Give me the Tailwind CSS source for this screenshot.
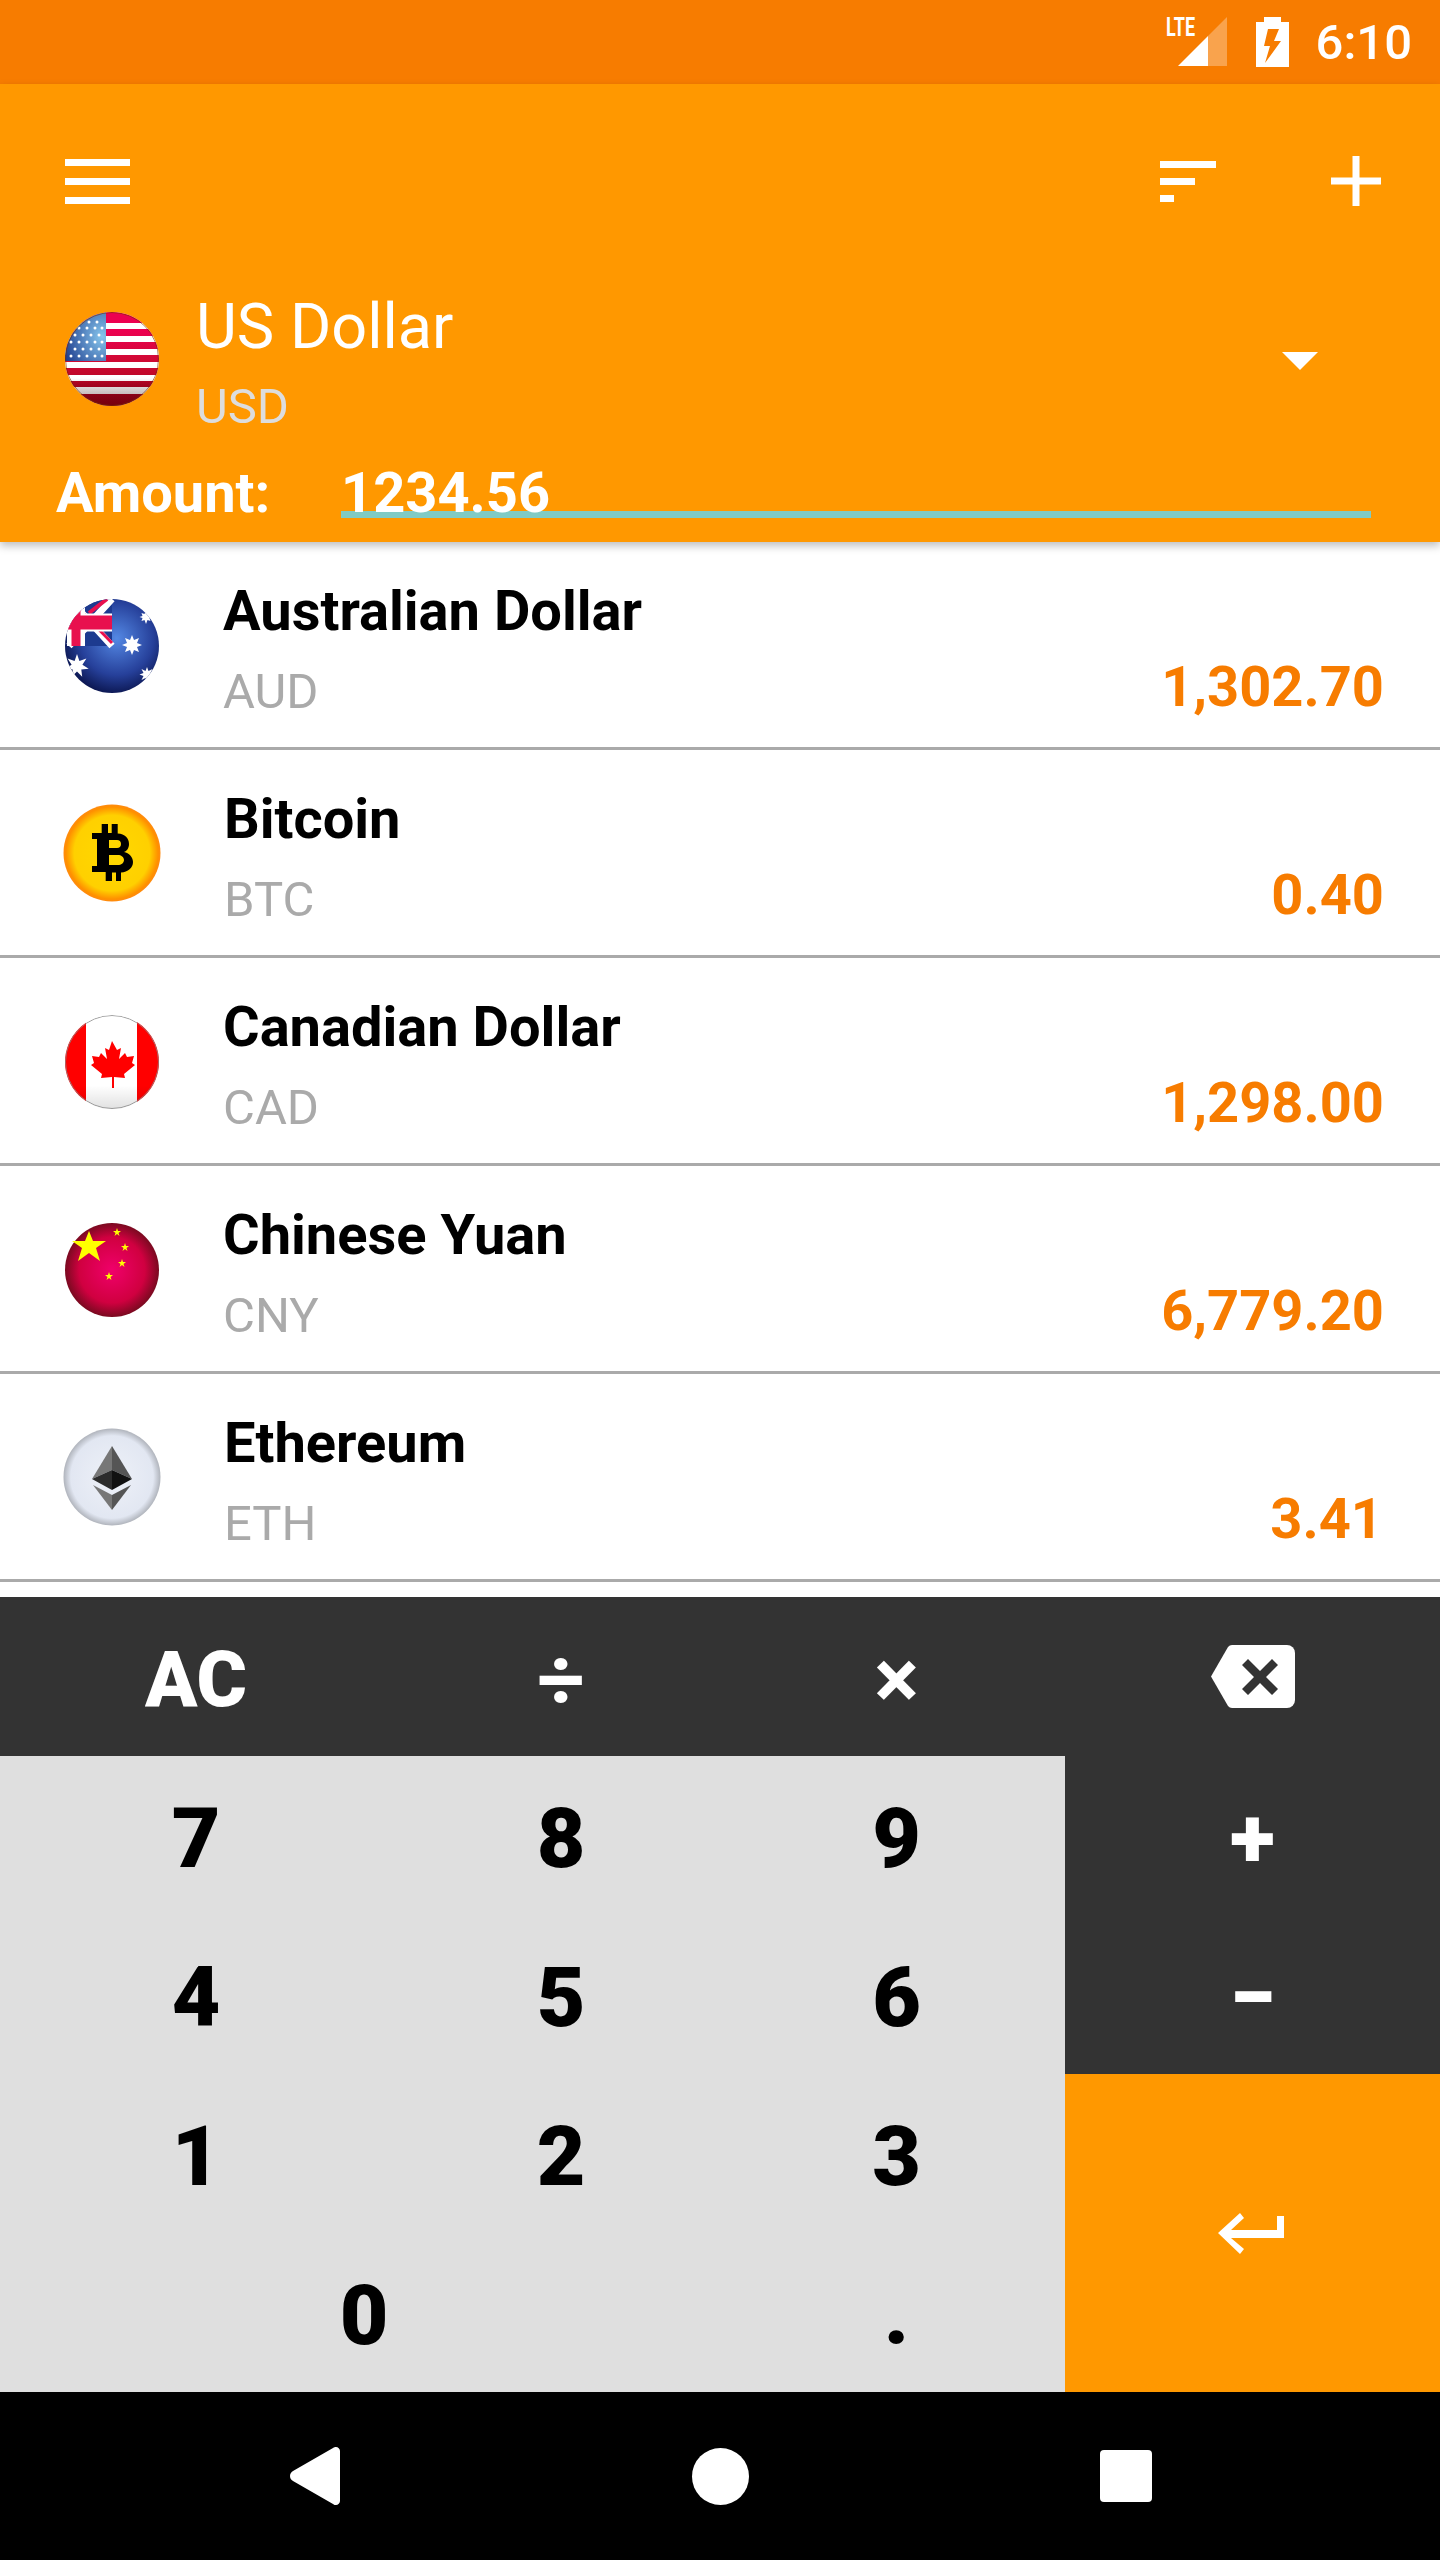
<!DOCTYPE html>
<html lang="en">
<head>
  <meta charset="UTF-8">
  <title>Currency Converter</title>
  <script src="https://cdn.jsdelivr.net/npm/@tailwindcss/browser@4"></script>
</head>
<body class="bg-white font-['Roboto',sans-serif] text-black">
<div class="w-[1440px] h-[2560px] flex flex-col overflow-hidden relative">

  <!-- Status bar -->
  <div class="h-[84px] bg-[#f77c00] flex items-center justify-end pr-[28px] shrink-0">
    <div class="relative w-[64px] h-[84px] mr-[26px]">
      <span class="absolute left-0 top-[13px] text-[25px] leading-[30px] font-bold text-white origin-left scale-x-[0.72]">LTE</span>
      <svg class="absolute left-0 top-0" width="64" height="84" viewBox="0 0 64 84">
        <path d="M12 66L42 36V66Z" fill="#fff"/>
        <path d="M42 36L61 17V66H42Z" fill="#fff" opacity=".3"/>
      </svg>
    </div>
    <svg class="mr-[27px]" width="33" height="50" viewBox="0 0 33 50">
      <path d="M8 0H25V5H33V50H0V5H8Z" fill="#fff"/>
      <path d="M12 12H23L18 24H25L9 46L14 29H8Z" fill="#f77c00"/>
    </svg>
    <span class="text-[49px] leading-none font-medium text-white">6:10</span>
  </div>

  <!-- App bar -->
  <div class="h-[458px] bg-[#ff9800] shrink-0 relative z-10 shadow-[0_4px_8px_rgba(0,0,0,0.25)]">
    <div class="h-[194px] flex items-center pl-[65px] pr-[59px]">
      <div class="flex flex-col gap-[12px] w-[65px]">
        <div class="h-[7px] bg-white"></div>
        <div class="h-[7px] bg-white"></div>
        <div class="h-[7px] bg-white"></div>
      </div>
      <div class="ml-auto flex flex-col gap-[10px] w-[56px]">
        <div class="h-[7px] w-[56px] bg-white"></div>
        <div class="h-[7px] w-[35px] bg-white"></div>
        <div class="h-[7px] w-[14px] bg-white"></div>
      </div>
      <svg class="ml-[115px]" width="50" height="50" viewBox="0 0 50 50"><path d="M21.5 0h7v21.5H50v7H28.5V50h-7V28.500H0v-7h21.5z" fill="#fff"/></svg>
    </div>

    <div class="h-[162px] flex items-center pl-[65px] pr-[122px]">
      <svg width="94" height="94" viewBox="0 0 94 94" class="shrink-0">
        <defs>
          <clipPath id="usClip"><circle cx="47" cy="47" r="47"/></clipPath>
          <radialGradient id="usCanton" cx="0.9" cy="0.5" r="1"><stop offset="0" stop-color="#86c5ec"/><stop offset="1" stop-color="#1c3a8c"/></radialGradient>
          <linearGradient id="usRed" x1="0" y1="0" x2="0" y2="1"><stop offset="0.2" stop-color="#ec0050"/><stop offset="0.55" stop-color="#cc0a30"/><stop offset="1" stop-color="#a00018"/></linearGradient>
          <linearGradient id="usShade" x1="0" y1="0" x2="0" y2="1"><stop offset="0.7" stop-color="#000" stop-opacity="0"/><stop offset="1" stop-color="#400" stop-opacity=".45"/></linearGradient>
        </defs>
        <g clip-path="url(#usClip)">
          <rect width="94" height="94" fill="#fff"/>
          <path d="M0 0h94v11H0zM0 17h94v7H0zM0 30h94v7H0zM0 43h94v7H0zM0 56h94v7H0zM0 69h94v6H0zM0 82h94v12H0z" fill="url(#usRed)"/>
          <rect width="41" height="49" fill="url(#usCanton)"/>
          <g fill="#fff">
            <circle cx="24" cy="10" r="1.500"/><circle cx="32" cy="10" r="1.500"/>
            <circle cx="14" cy="16" r="1.500"/><circle cx="22" cy="16" r="1.500"/><circle cx="30" cy="16" r="1.500"/><circle cx="37" cy="16" r="1.500"/>
            <circle cx="10" cy="23" r="1.500"/><circle cx="18" cy="23" r="1.500"/><circle cx="26" cy="23" r="1.500"/><circle cx="34" cy="23" r="1.500"/>
            <circle cx="6" cy="30" r="1.500"/><circle cx="14" cy="30" r="1.500"/><circle cx="22" cy="30" r="1.500"/><circle cx="30" cy="30" r="1.500"/><circle cx="37" cy="30" r="1.500"/>
            <circle cx="10" cy="37" r="1.500"/><circle cx="18" cy="37" r="1.500"/><circle cx="26" cy="37" r="1.500"/><circle cx="34" cy="37" r="1.500"/>
            <circle cx="6" cy="44" r="1.500"/><circle cx="14" cy="44" r="1.500"/><circle cx="22" cy="44" r="1.500"/><circle cx="30" cy="44" r="1.500"/><circle cx="37" cy="44" r="1.500"/>
          </g>
          <rect width="94" height="94" fill="url(#usShade)"/>
          <circle cx="47" cy="47" r="46.500" fill="none" stroke="#7a3000" stroke-opacity=".6"/>
        </g>
      </svg>
      <div class="ml-[37px] mt-[8px] flex flex-col">
        <span class="text-[63px] leading-[74px] text-white">US Dollar</span>
        <span class="text-[49px] leading-[58px] mt-[14px] text-[#ddd]">USD</span>
      </div>
      <div class="ml-auto mt-[4px] w-0 h-0 border-l-[18px] border-r-[18px] border-t-[18px] border-l-transparent border-r-transparent border-t-white"></div>
    </div>

    <div class="flex items-start pl-[56px] mt-[20px]">
      <span class="w-[285px] text-[56px] leading-[66px] font-bold text-white">Amount:</span>
      <div class="w-[1030px] h-[58px] border-b-[7px] border-[#80cbc4] text-[56px] leading-[66px] font-bold text-white">1234.56</div>
    </div>
  </div>

  <!-- Currency list -->
  <div class="flex-1 bg-white overflow-hidden">

    <div class="h-[208px] border-b-[3px] border-[#aaa] flex items-center pl-[65px] pr-[56px]">
      <svg width="94" height="94" viewBox="0 0 94 94" class="shrink-0 mt-[3px]">
        <defs>
          <clipPath id="auClip"><circle cx="47" cy="47" r="47"/></clipPath>
          <radialGradient id="auBlue" cx="0.55" cy="0.42" r="0.6"><stop offset="0" stop-color="#5488e4"/><stop offset="0.65" stop-color="#26409a"/><stop offset="1" stop-color="#0b1650"/></radialGradient>
        </defs>
        <g clip-path="url(#auClip)">
          <rect width="94" height="94" fill="url(#auBlue)"/>
          <path d="M4 0H47V47H4Z" fill="#1d3a8f"/>
          <path d="M4 0L47 47M47 0L4 47" stroke="#fff" stroke-width="7"/>
          <path d="M14 10L47 44" stroke="#e8104e" stroke-width="3"/>
          <path d="M42 0L24 14" stroke="#e8104e" stroke-width="4"/>
          <path d="M11 0V47M0 23.500H47" stroke="#fff" stroke-width="18"/>
          <path d="M11 0V47" stroke="#e8104e" stroke-width="9"/>
          <path d="M0 23.500H47" stroke="#e8104e" stroke-width="14"/>
          <path d="M67 36l2 5 5-2-2 5 5 2-5 2 2 5-5-2-2 5-2-5-5 2 2-5-5-2 5-2-2-5 5 2z" fill="#fff"/>
          <polygon points="12,55 14.400,62 21.400,59.500 17.400,65.800 23.700,69.700 16.300,70.400 17.200,77.800 12,72.500 6.800,77.800 7.700,70.400 0.300,69.700 6.600,65.800 2.600,59.500 9.600,62" fill="#fff"/>
          <path d="M82 68l1.500 4 4-2-2 4 4 1.500-4 1.500 2 4-4-2-1.500 4-1.500-4-4 2 2-4-4-1.500 4-1.500-2-4 4 2z" fill="#fff"/>
          <path d="M81 11l1.500 4 3-1-1 3 3 1-3 1 1 3-3-1-1.500 4-1.500-4-3 1 1-3-3-1 3-1-1-3 3 1z" fill="#fff"/>
        </g>
      </svg>
      <div class="ml-[64px] flex flex-col self-start pt-[36px]">
        <span class="text-[56px] leading-[66px] font-bold">Australian Dollar</span>
        <span class="text-[49px] leading-[58px] mt-[19px] text-[#aaa]">AUD</span>
      </div>
      <span class="ml-auto self-end pb-[27px] text-[56px] leading-[66px] font-bold text-[#f77c00]">1,302.70</span>
    </div>

    <div class="h-[208px] border-b-[3px] border-[#aaa] flex items-center pl-[63px] pr-[56px]">
      <svg width="98" height="98" viewBox="0 0 98 98" class="shrink-0">
        <defs><radialGradient id="btcBg" cx="0.5" cy="0.5" r="0.5"><stop offset="0" stop-color="#ffd900"/><stop offset="0.78" stop-color="#ffd000"/><stop offset="0.95" stop-color="#ff9000"/><stop offset="1" stop-color="#ff8a10"/></radialGradient></defs>
        <circle cx="49" cy="49" r="48.500" fill="url(#btcBg)"/>
        <path d="M38.700 20h6.300v9h3.700v-9h6v9.500C62 30 66 34 66 40c0 4-2 7-5 8 5 1 9 5 9 10 0 6-5 10-12 10.500V77h-5v-8.500h-4V77h-6.300v-9H29v-6h5V35h-5v-6h9.700zM46 36v8h8c2.500 0 4-1.500 4-4s-1.500-4-4-4zM46 51v10h9c3 0 6-2 6-5s-3-5-6-5z" fill="#000" fill-rule="evenodd"/>
      </svg>
      <div class="ml-[63px] flex flex-col self-start pt-[36px]">
        <span class="text-[56px] leading-[66px] font-bold">Bitcoin</span>
        <span class="text-[49px] leading-[58px] mt-[19px] text-[#aaa]">BTC</span>
      </div>
      <span class="ml-auto self-end pb-[27px] text-[56px] leading-[66px] font-bold text-[#f77c00]">0.40</span>
    </div>

    <div class="h-[208px] border-b-[3px] border-[#aaa] flex items-center pl-[65px] pr-[56px]">
      <svg width="94" height="94" viewBox="0 0 94 94" class="shrink-0 mt-[3px]">
        <defs>
          <clipPath id="caClip"><circle cx="47" cy="47" r="47"/></clipPath>
          <linearGradient id="caShade" x1="0" y1="0" x2="0" y2="1"><stop offset="0.75" stop-color="#000" stop-opacity="0"/><stop offset="1" stop-color="#000" stop-opacity=".12"/></linearGradient>
        </defs>
        <g clip-path="url(#caClip)">
          <rect width="94" height="94" fill="#fff"/>
          <rect width="21" height="94" fill="#f00"/>
          <rect x="72" width="22" height="94" fill="#f00"/>
          <path d="M47 26l5 9 4-2-2 11 6-6 2 4 7-1-2 7 3 2-11 9 1 4-11-1v11h-2V62l-11 1 1-4-11-9 3-2-2-7 7 1 2-4 6 6-2-11 4 2z" fill="#f00"/>
          <rect width="94" height="94" fill="url(#caShade)"/>
          <circle cx="47" cy="47" r="46.500" fill="none" stroke="#888" stroke-opacity=".8"/>
        </g>
      </svg>
      <div class="ml-[64px] flex flex-col self-start pt-[36px]">
        <span class="text-[56px] leading-[66px] font-bold">Canadian Dollar</span>
        <span class="text-[49px] leading-[58px] mt-[19px] text-[#aaa]">CAD</span>
      </div>
      <span class="ml-auto self-end pb-[27px] text-[56px] leading-[66px] font-bold text-[#f77c00]">1,298.00</span>
    </div>

    <div class="h-[208px] border-b-[3px] border-[#aaa] flex items-center pl-[65px] pr-[56px]">
      <svg width="94" height="94" viewBox="0 0 94 94" class="shrink-0 mt-[3px]">
        <defs><radialGradient id="cnRed" cx="0.5" cy="0.5" r="0.5"><stop offset="0" stop-color="#f0006a"/><stop offset="0.7" stop-color="#d00040"/><stop offset="1" stop-color="#7a0a20"/></radialGradient></defs>
        <circle cx="47" cy="47" r="47" fill="url(#cnRed)"/>
        <path d="M24 8l4 10h13l-10 7 4 13-11-8-11 8 4-13L7 18h13z" fill="#ff0"/>
        <path d="M52 5l1 3h3l-2.500 2 1 3-2.500-2-2.500 2 1-3L48 8h3z" fill="#ff0"/>
        <path d="M60 20l1 3h3l-2.500 2 1 3-2.500-2-2.500 2 1-3L56 23h3z" fill="#ff0"/>
        <path d="M57 36l1 3h3l-2.500 2 1 3-2.500-2-2.500 2 1-3L53 39h3z" fill="#ff0"/>
        <path d="M44 49l1 3h3l-2.500 2 1 3-2.500-2-2.500 2 1-3L40 52h3z" fill="#ff0"/>
      </svg>
      <div class="ml-[64px] flex flex-col self-start pt-[36px]">
        <span class="text-[56px] leading-[66px] font-bold">Chinese Yuan</span>
        <span class="text-[49px] leading-[58px] mt-[19px] text-[#aaa]">CNY</span>
      </div>
      <span class="ml-auto self-end pb-[27px] text-[56px] leading-[66px] font-bold text-[#f77c00]">6,779.20</span>
    </div>

    <div class="h-[208px] border-b-[3px] border-[#aaa] flex items-center pl-[63px] pr-[57px]">
      <svg width="98" height="98" viewBox="0 0 98 98" class="shrink-0">
        <defs><radialGradient id="ethBg" cx="0.5" cy="0.5" r="0.5"><stop offset="0" stop-color="#eef1f8"/><stop offset="0.85" stop-color="#e2e7f2"/><stop offset="1" stop-color="#b0b4bc"/></radialGradient></defs>
        <circle cx="49" cy="49" r="48.500" fill="url(#ethBg)"/>
        <path d="M49 18L29 51l20-9z" fill="#777"/>
        <path d="M49 18l20 33-20-9z" fill="#555"/>
        <path d="M29 51l20-9v20z" fill="#2c2c2c"/>
        <path d="M69 51L49 42v20z" fill="#111"/>
        <path d="M30 57l19 25V67z" fill="#777"/>
        <path d="M68 57L49 82V67z" fill="#555"/>
      </svg>
      <div class="ml-[63px] flex flex-col self-start pt-[36px]">
        <span class="text-[56px] leading-[66px] font-bold">Ethereum</span>
        <span class="text-[49px] leading-[58px] mt-[19px] text-[#aaa]">ETH</span>
      </div>
      <span class="ml-auto self-end pb-[27px] text-[56px] leading-[66px] font-bold text-[#f77c00]">3.41</span>
    </div>
  </div>

  <!-- Keypad -->
  <div class="h-[795px] shrink-0 grid grid-cols-[392px_336px_337px_375px] grid-rows-[repeat(5,159px)] text-[84px] font-black">
    <div class="bg-[#333] text-white flex items-center justify-center pt-[8px] text-[77px]">AC</div>
    <div class="bg-[#333] text-white flex items-center justify-center pt-[7px] pl-[2px] font-bold">÷</div>
    <div class="bg-[#333] text-white flex items-center justify-center pt-[7px] font-bold">×</div>
    <div class="bg-[#333] flex items-center justify-center">
      <svg width="84" height="63" viewBox="0 0 84 63"><path d="M21 0H76a8 8 0 0 1 8 8V55a8 8 0 0 1-8 8H21a6 6 0 0 1-4-2L0 31.500 17 2a6 6 0 0 1 4-2Z" fill="#fff"/><path d="M31 20l6-6 12 12 12-12 6 6-12 12 12 12-6 6-12-12-12 12-6-6 12-12z" fill="#333"/></svg>
    </div>

    <div class="bg-[#dfdfdf] flex items-center justify-center pt-[7px]">7</div>
    <div class="bg-[#dfdfdf] flex items-center justify-center pt-[7px] pl-[2px]">8</div>
    <div class="bg-[#dfdfdf] flex items-center justify-center pt-[7px]">9</div>
    <div class="bg-[#333] text-white flex items-center justify-center pt-[7px]">+</div>

    <div class="bg-[#dfdfdf] flex items-center justify-center pt-[7px]">4</div>
    <div class="bg-[#dfdfdf] flex items-center justify-center pt-[7px] pl-[2px]">5</div>
    <div class="bg-[#dfdfdf] flex items-center justify-center pt-[7px]">6</div>
    <div class="bg-[#333] text-white flex items-center justify-center pt-[7px]">−</div>

    <div class="bg-[#dfdfdf] flex items-center justify-center pt-[7px]">1</div>
    <div class="bg-[#dfdfdf] flex items-center justify-center pt-[7px] pl-[2px]">2</div>
    <div class="bg-[#dfdfdf] flex items-center justify-center pt-[7px]">3</div>
    <div class="row-span-2 bg-[#ff9800] flex items-center justify-center pr-[3px]">
      <svg width="66" height="41" viewBox="0 0 66 41"><path d="M66 3V25H13L26 36l-4 5L0 20 22 0l4 5-13 12H59V3z" fill="#fff"/></svg>
    </div>

    <div class="col-span-2 bg-[#dfdfdf] flex items-center justify-center pt-[7px]">0</div>
    <div class="bg-[#dfdfdf] flex items-center justify-center pt-[7px]">.</div>
  </div>

  <!-- Nav bar -->
  <div class="h-[168px] bg-black shrink-0 flex items-center justify-between pl-[290px] pr-[288px]">
    <svg width="50" height="58" viewBox="0 0 50 58"><path d="M46 0c2 0 4 2 4 4V54c0 2-2 4-4 4-1 0-2 0-3-1L3 34c-4-2-4-8 0-10L43 1c1-1 2-1 3-1z" fill="#fff"/></svg>
    <div class="w-[57px] h-[57px] rounded-full bg-white"></div>
    <div class="w-[52px] h-[52px] rounded-[4px] bg-white"></div>
  </div>
</div>
</body>
</html>
